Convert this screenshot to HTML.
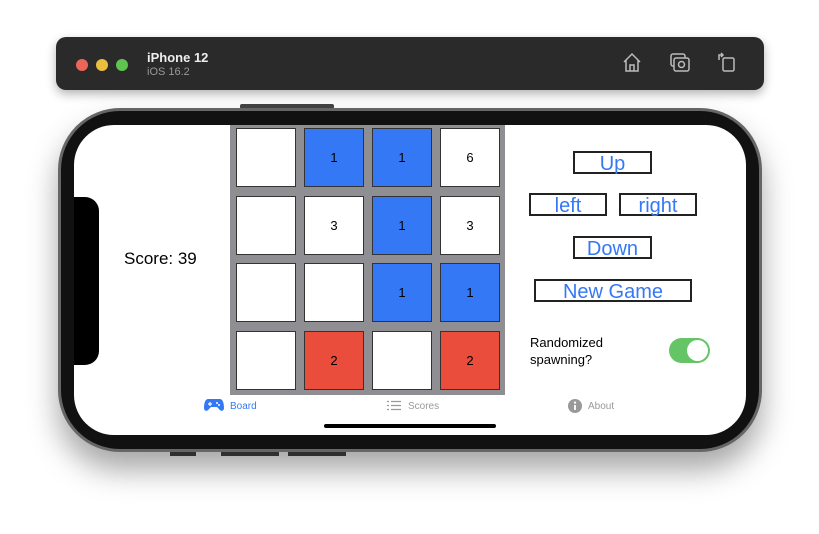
<!DOCTYPE html>
<html><head><meta charset="utf-8"><style>
*{margin:0;padding:0;box-sizing:border-box}
body{width:819px;height:534px;background:#fff;position:relative;overflow:hidden;font-family:"Liberation Sans",sans-serif}
.bar{position:absolute;left:56px;top:37px;width:708px;height:53px;background:#2a2a2a;border-radius:10px;box-shadow:0 4px 10px rgba(0,0,0,.3)}
.dot{position:absolute;top:59px;width:12px;height:12px;border-radius:50%}
.phone{position:absolute;left:58px;top:108px;width:704px;height:344px;background:#111;border-radius:62px;border:3px solid #666;box-shadow:0 18px 30px rgba(0,0,0,.35)}
.screen{position:absolute;left:74px;top:125px;width:672px;height:310px;background:#fff;border-radius:40px;overflow:hidden}
.notch{position:absolute;left:0;top:72px;width:25px;height:168px;background:#000;border-radius:0 14px 14px 0}
.grid{position:absolute;left:156px;top:0;width:275px;height:270px;background:#8e8e93}
.c{position:absolute;width:60px;height:59px;border:1px solid #333;background:#fff;font-size:13px;display:flex;align-items:center;justify-content:center;color:#000}
.b{background:#3478f6}.r{background:#eb4d3d}
.btn{position:absolute;border:2px solid #222;color:#3478f6;font-size:20px;display:flex;align-items:center;justify-content:center;height:23px;padding-top:4px}
.tab{position:absolute;top:276px;font-size:10px;color:#999}
</style></head><body>
<div class="bar"></div>
<div class="dot" style="left:76px;background:#ec6559"></div>
<div class="dot" style="left:96px;background:#e9bd3f"></div>
<div class="dot" style="left:116px;background:#5fc44f"></div>
<div style="position:absolute;left:147px;top:50px;color:#eee;font-size:13px;font-weight:bold">iPhone 12</div>
<div style="position:absolute;left:147px;top:66px;color:#999;font-size:11px">iOS 16.2</div>
<svg style="position:absolute;left:620px;top:50px" width="120" height="26" fill="none" stroke="#bbb" stroke-width="1.5">
<path d="M4 12 L12 4 L20 12 M6 10 V21 H18 V10 M10 21 V15 H14 V21"/>
<rect x="51" y="4" width="14" height="12" rx="2"/><rect x="54" y="8" width="15" height="13" rx="2" fill="#2a2a2a"/><circle cx="61.5" cy="14.5" r="3"/>
<rect x="103" y="8" width="11" height="13" rx="1.5"/><path d="M99 10 V5 H103 M101 3 L103 5 L101 7"/>
</svg>
<div style="position:absolute;left:240px;top:104px;width:94px;height:5px;background:#444;border-radius:2px"></div>
<div style="position:absolute;left:170px;top:452px;width:26px;height:4px;background:#444"></div>
<div style="position:absolute;left:221px;top:452px;width:58px;height:4px;background:#444"></div>
<div style="position:absolute;left:288px;top:452px;width:58px;height:4px;background:#444"></div>
<div class="phone"></div>
<div class="screen">
<div class="notch"></div>
<div style="position:absolute;left:50px;top:124px;font-size:17px">Score: 39</div>
<div class="grid"></div>
<div class="c" style="left:162px;top:3px"></div>
<div class="c b" style="left:230px;top:3px">1</div>
<div class="c b" style="left:298px;top:3px">1</div>
<div class="c" style="left:366px;top:3px">6</div>
<div class="c" style="left:162px;top:71px"></div>
<div class="c" style="left:230px;top:71px">3</div>
<div class="c b" style="left:298px;top:71px">1</div>
<div class="c" style="left:366px;top:71px">3</div>
<div class="c" style="left:162px;top:138px"></div>
<div class="c" style="left:230px;top:138px"></div>
<div class="c b" style="left:298px;top:138px">1</div>
<div class="c b" style="left:366px;top:138px">1</div>
<div class="c" style="left:162px;top:206px"></div>
<div class="c r" style="left:230px;top:206px">2</div>
<div class="c" style="left:298px;top:206px"></div>
<div class="c r" style="left:366px;top:206px">2</div>
<div class="btn" style="left:499px;top:26px;width:79px">Up</div>
<div class="btn" style="left:455px;top:68px;width:78px">left</div>
<div class="btn" style="left:545px;top:68px;width:78px">right</div>
<div class="btn" style="left:499px;top:111px;width:79px">Down</div>
<div class="btn" style="left:460px;top:154px;width:158px">New Game</div>
<div style="position:absolute;left:456px;top:209px;font-size:13px;line-height:17px">Randomized<br>spawning?</div>
<div style="position:absolute;left:595px;top:213px;width:41px;height:25px;border-radius:13px;background:#65c466"><div style="position:absolute;right:2px;top:2px;width:21px;height:21px;border-radius:50%;background:#fff"></div></div>
<svg style="position:absolute;left:130px;top:273px" width="20" height="14"><path d="M4 1 H16 C19 1 20 6 20 10 C20 13 17 14 15 11 L13 9 H7 L5 11 C3 14 0 13 0 10 C0 6 1 1 4 1Z" fill="#3478f6"/><path d="M4 6 H8 M6 4 V8" stroke="#fff" stroke-width="1.2"/><circle cx="13" cy="5" r="1" fill="#fff"/><circle cx="15" cy="7" r="1" fill="#fff"/></svg>
<div class="tab" style="left:156px;color:#3478f6">Board</div>
<svg style="position:absolute;left:313px;top:275px" width="14" height="11" stroke="#999" stroke-width="1.3"><path d="M0 1.5H2M4 1.5H14M0 5.5H2M4 5.5H14M0 9.5H2M4 9.5H14"/></svg>
<div class="tab" style="left:334px">Scores</div>
<svg style="position:absolute;left:494px;top:274px" width="14" height="14"><circle cx="7" cy="7" r="7" fill="#999"/><path d="M7 6V11" stroke="#fff" stroke-width="1.8"/><circle cx="7" cy="3.6" r="1.1" fill="#fff"/></svg>
<div class="tab" style="left:514px">About</div>
<div style="position:absolute;left:250px;top:299px;width:172px;height:4px;background:#000;border-radius:2px"></div>
</div>
</body></html>
